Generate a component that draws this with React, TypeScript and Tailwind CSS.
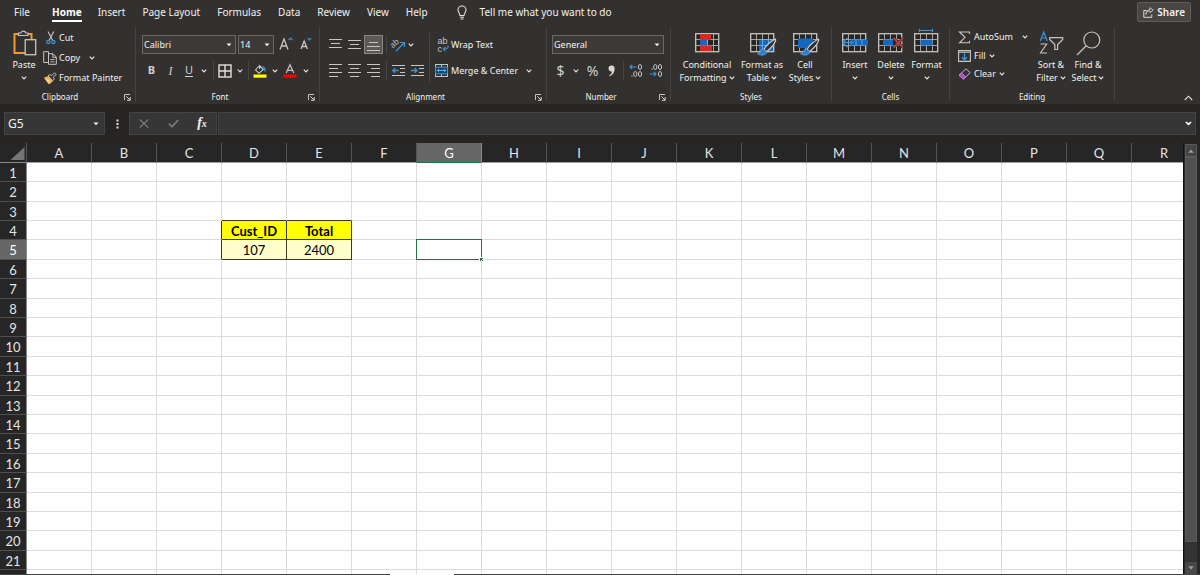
import React from "react";

const BLUE = "#3a96dd";
const GREY = "#c8c6c4";

function Chevron() {
  return (
    <svg width="6" height="4" viewBox="0 0 6 4" fill="none" className="shrink-0">
      <path d="M0.8 0.7 L3 2.9 L5.2 0.7" stroke="#e6e4e2" strokeWidth="1.2" />
    </svg>
  );
}

function Caret() {
  return (
    <svg width="6" height="4" viewBox="0 0 6 4" className="pointer-events-none shrink-0">
      <path d="M0.5 0.5 H5.5 L3 3.3 Z" fill="#f0f0f0" />
    </svg>
  );
}

function Launcher() {
  return (
    <svg width="7" height="7" viewBox="0 0 7 7" fill="none" stroke="#d6d4d2">
      <path d="M0.5 6 V0.5 H6" strokeWidth="0.9" />
      <path d="M2.3 2.3 L6 6 M6.2 3 V6.3 H3" strokeWidth="1" />
    </svg>
  );
}

function Icon({ w, h, children }: { w: number; h: number; children: React.ReactNode }) {
  return (
    <svg width={w} height={h} viewBox={`0 0 ${w} ${h}`} fill="none" className="shrink-0 overflow-visible">
      {children}
    </svg>
  );
}

function Tool({ label, className, children }: { label: string; className: string; children: React.ReactNode }) {
  return (
    <button aria-label={label} className={`flex h-[19px] shrink-0 items-center justify-center ${className}`}>
      {children}
    </button>
  );
}

function Sep() {
  return <span className="h-[19px] w-px shrink-0 bg-[#484644]" />;
}

function Group({
  title,
  launcher,
  className,
  children,
}: {
  title: string;
  launcher?: boolean;
  className: string;
  children: React.ReactNode;
}) {
  return (
    <section aria-label={title} className={`flex shrink-0 ${className}`}>
      <div className="flex min-w-0 flex-1 flex-col">
        <div className="h-[65px]">{children}</div>
        <div className="flex h-[14px] items-center text-[8px] leading-[14px]">
          <span className="flex-1 text-center">{title}</span>
          {launcher && (
            <button aria-label={`${title} settings`} className="flex w-[15px] justify-end pr-[4px]">
              <Launcher />
            </button>
          )}
        </div>
      </div>
      <span className="mt-[2px] h-[74px] w-px bg-[#454341]" />
    </section>
  );
}

function Combo({ label, value, className }: { label: string; value: string; className: string }) {
  return (
    <div className={`flex h-[19px] shrink-0 items-center border border-[#6b6967] bg-[#3b3a39] pr-[3px] pl-px ${className}`}>
      <select aria-label={label} defaultValue={value} className="min-w-0 flex-1 appearance-none bg-transparent text-[9px] outline-none">
        <option>{value}</option>
      </select>
      <Caret />
    </div>
  );
}

function Big({
  icon,
  lines,
  below,
  className,
}: {
  icon: React.ReactNode;
  lines: string[];
  below?: boolean;
  className: string;
}) {
  return (
    <button className={`flex shrink-0 flex-col items-center text-[9px] leading-[13px] whitespace-nowrap ${className}`}>
      <span className="flex h-[33px] items-center pt-[3px]">{icon}</span>
      <span>{lines[0]}</span>
      <span className="flex h-[13px] items-center gap-[2px]">
        {!below && <span>{lines[1]}</span>}
        <Chevron />
      </span>
    </button>
  );
}

function Lines({ rows, w, h }: { rows: [number, number, number][]; w: number; h: number }) {
  return (
    <Icon w={w} h={h}>
      {rows.map(([x, y, len]) => (
        <path key={y} d={`M${x} ${y + 0.5} h${len}`} stroke={GREY} />
      ))}
    </Icon>
  );
}

function TableBase() {
  return (
    <g>
      <rect x="0.7" y="2.7" width="23" height="18" fill="#262524" stroke={GREY} strokeWidth="1.3" />
      <path d="M6.5 3 V20 M12.5 3 V20 M18.5 3 V20 M1 8.5 H24 M1 14.5 H24" stroke="#a8a6a4" strokeWidth="1" />
    </g>
  );
}

function Brush() {
  return (
    <g>
      <path d="M25.3 8 C20 11 15.5 15.5 14 18.5 L16.5 20.7 C20 18 24.5 13.5 25.8 9 Z" fill="#323130" stroke="#d0cecc" strokeWidth="1.1" />
      <path d="M13.2 17.7 C10 18 11 22 7.5 22.8 C11 25 16.5 24.6 16.8 20.8 Z" fill="#2b7fd0" stroke="#79b8ee" strokeWidth="0.6" />
    </g>
  );
}

const tabs = ["Insert", "Page Layout", "Formulas", "Data", "Review", "View", "Help"];
const columns = "ABCDEFGHIJKLMNOPQR".split("");
const rows = Array.from({ length: 21 }, (_, i) => i + 1);
const values: Record<string, string> = { D4: "Cust_ID", E4: "Total", D5: "107", E5: "2400" };

function cellStyle(col: string, row: number) {
  const inTable = (col === "D" || col === "E") && (row === 4 || row === 5);
  const right = inTable || (col === "C" && (row === 4 || row === 5)) ? "border-r-[#3a3a20]" : "border-r-[#dcdcdc]";
  const bottom = inTable || (row === 3 && (col === "D" || col === "E")) ? "border-b-[#3a3a20]" : "border-b-[#dcdcdc]";
  const fill = inTable ? (row === 4 ? "bg-[#ffff00] font-bold" : "bg-[#ffffcc]") : "";
  return `${right} ${bottom} ${fill}`;
}

function Sheet() {
  return (
    <table className="w-[1197px] shrink-0 table-fixed border-separate border-spacing-0 text-center font-['Lato','Liberation_Sans',sans-serif] text-[13px] leading-[16px]">
      <colgroup>
        <col className="w-[27px]" />
        {columns.map((c) => (
          <col key={c} className="w-[65px]" />
        ))}
      </colgroup>
      <thead>
        <tr className="h-[20px] bg-[#262626] text-[#e4e4e4]">
          <td className="border-r border-b border-r-[#555] border-b-[#8a8a8a] p-0">
            <svg width="26" height="19" viewBox="0 0 26 19" className="block">
              <path d="M24.5 4 V17 H10.5 Z" fill="#767676" />
            </svg>
          </td>
          {columns.map((c) => (
            <th
              key={c}
              scope="col"
              className={`border-r border-b p-0 pt-px font-normal ${
                c === "G" ? "border-r-[#8a8a8a] border-b-[#217346] bg-[#666666] text-white" : "border-r-[#555] border-b-[#a0a0a0]"
              }`}
            >
              {c}
            </th>
          ))}
        </tr>
      </thead>
      <tbody>
        {rows.map((r) => (
          <tr key={r} className="h-[19px] nth-[5n]:h-[20px] nth-[5n+2]:h-[20px]">
            <th
              scope="row"
              className={`border-r border-b border-r-[#8a8a8a] border-b-[#505050] p-0 pt-px font-normal ${
                r === 5 ? "bg-[#666666] text-white" : "bg-[#262626] text-[#e4e4e4]"
              }`}
            >
              {r}
            </th>
            {columns.map((c) => (
              <td key={c} className={`relative border-r border-b p-0 pt-px text-black ${cellStyle(c, r)}`}>
                {values[c + r]}
                {c === "G" && r === 5 && (
                  <span className="absolute -top-px -right-px -bottom-px -left-px border border-[#217346]">
                    <span className="absolute -right-[2px] -bottom-[2px] size-[4px] border-t border-l border-white bg-[#217346]" />
                  </span>
                )}
              </td>
            ))}
          </tr>
        ))}
        <tr className="h-[20px]">
          <th className="border-r border-r-[#8a8a8a] bg-[#262626] p-0" />
          {columns.map((c) => (
            <td key={c} className="border-r border-r-[#dcdcdc] p-0" />
          ))}
        </tr>
      </tbody>
    </table>
  );
}

export default function App() {
  return (
    <div className="flex h-screen flex-col overflow-hidden bg-[#262524] font-['Noto_Sans','Open_Sans',sans-serif] text-[#f3f2f1]">
      <header className="shrink-0 bg-[#323130]">
        <nav className="flex h-[25px] items-start pt-[4px] pr-[9px] pl-[14px] text-[10px] leading-[16px] whitespace-nowrap">
          <button>File</button>
          <button className="ml-[22px] border-b-2 border-white font-bold text-white">Home</button>
          <div className="ml-[16px] flex gap-[17px]">
            {tabs.map((t) => (
              <button key={t}>{t}</button>
            ))}
          </div>
          <button className="ml-[29px] flex gap-[13px]">
            <span className="pt-px">
              <Icon w={10} h={15}>
                <path d="M3 10.5 C3 8.5 1 7.5 1 5 A4 4 0 0 1 9 5 C9 7.5 7 8.5 7 10.5 Z" stroke="#e4e2e0" strokeWidth="1.1" />
                <path d="M3 12.2 H7 M3.5 14 H6.5" stroke="#e4e2e0" strokeWidth="1" />
              </Icon>
            </span>
            <span>Tell me what you want to do</span>
          </button>
          <button className="-mt-[2px] ml-auto flex h-[20px] items-center gap-[3px] rounded-[2px] border border-[#605e5c] bg-[#484644] px-[5px] font-semibold">
            <Icon w={11} h={11}>
              <path d="M3.5 3.5 H0.8 V10.3 H8.8 V7.5" stroke="#dddbd9" />
              <path d="M3 7.5 C3.2 5 4.5 3.8 7 3.8 V5.7 L10.3 3 L7 0.7 V2.4 C4.5 2.6 3 4.5 3 7.5 Z" stroke="#dddbd9" strokeWidth="0.8" />
            </Icon>
            Share
          </button>
        </nav>

        <div className="flex h-[79px]">
          <Group title="Clipboard" launcher className="w-[136px]">
            <div className="flex pl-[9px]">
              <Big
                className="w-[30px]"
                below
                lines={["Paste"]}
                icon={
                  <Icon w={22} h={26}>
                    <rect x="1.5" y="4" width="17" height="19" stroke="#f09a28" strokeWidth="2" />
                    <path d="M5.5 5.5 V3 H8 C8 0.5 12.5 0.5 12.5 3 H15 V5.5 Z" fill="#323130" stroke={GREY} strokeWidth="1.1" />
                    <rect x="12.2" y="9.7" width="10.5" height="15" fill="#323130" stroke={GREY} strokeWidth="1.3" />
                  </Icon>
                }
              />
              <div className="flex flex-col pt-[3px] pl-[4px] text-[9px] whitespace-nowrap">
                <button className="flex h-[20px] items-center">
                  <span className="flex w-[16px] justify-center">
                    <Icon w={10} h={14}>
                      <path d="M2 0.5 L6.7 9.5 M7.7 0.5 L3 9.5" stroke={GREY} strokeWidth="1.1" />
                      <circle cx="2.3" cy="11" r="1.6" stroke={BLUE} strokeWidth="1.2" />
                      <circle cx="7.4" cy="11" r="1.6" stroke={BLUE} strokeWidth="1.2" />
                    </Icon>
                  </span>
                  Cut
                </button>
                <button className="flex h-[20px] items-center">
                  <span className="flex w-[16px]">
                    <Icon w={14} h={14}>
                      <path d="M5 11.5 H0.7 V0.7 H5.5 M5.5 0.7 V3" stroke={GREY} />
                      <path d="M5.5 2.7 H10 L13.3 6 V13.3 H5.5 Z M9.8 3 V6.3 H13" stroke={GREY} />
                      <path d="M7.3 8.5 H11.5 M7.3 10.8 H11.5" stroke={GREY} strokeWidth="0.9" />
                    </Icon>
                  </span>
                  Copy
                  <span className="pl-[9px]">
                    <Chevron />
                  </span>
                </button>
                <button className="flex h-[20px] items-center">
                  <span className="flex w-[16px]">
                    <Icon w={14} h={13}>
                      <path d="M0.8 5.5 L5 4.3 L10 9.2 L5.8 12.5 Z" fill="#f0b04a" />
                      <path d="M2.5 7.5 L7 8.8 M4 9.5 L7.5 10.5" stroke="#fff2d8" strokeWidth="0.8" />
                      <path d="M5 4 L7 2.5 L8.5 3.8 L11.5 0.8 L13.2 2.5 L10.2 5.4 L11.4 7 L9.8 8.7 Z" fill="#323130" stroke={GREY} strokeWidth="1" />
                    </Icon>
                  </span>
                  Format Painter
                </button>
              </div>
            </div>
          </Group>

          <Group title="Font" launcher className="w-[184px]">
            <div className="flex flex-col gap-[7px] pt-[10px] pl-[6px]">
              <div className="flex items-center">
                <Combo label="Font name" value="Calibri" className="w-[94px]" />
                <Combo label="Font size" value="14" className="ml-[2px] w-[36px]" />
                <Tool label="Increase font size" className="ml-[2px] w-[20px] pb-[3px]">
                  <Icon w={14} h={13}>
                    <path d="M1 12.5 L5 2 L9 12.5 M2.4 9 H7.6" stroke={GREY} strokeWidth="1.3" />
                    <path d="M9.7 3 L11.5 1.2 L13.3 3" stroke={BLUE} strokeWidth="1.2" />
                  </Icon>
                </Tool>
                <Tool label="Decrease font size" className="w-[20px] pb-[3px]">
                  <Icon w={12} h={13}>
                    <path d="M1 12 L4.2 4 L7.4 12 M2 9.5 H6.4" stroke={GREY} strokeWidth="1.3" />
                    <path d="M7.7 1.2 L9.4 3 L11.1 1.2" stroke={BLUE} strokeWidth="1.2" />
                  </Icon>
                </Tool>
              </div>
              <div className="flex items-center text-[11px] text-[#d2d0ce]">
                <Tool label="Bold" className="w-[19px] font-bold">B</Tool>
                <Tool label="Italic" className="w-[19px] font-['Liberation_Serif',serif] text-[12px] italic">I</Tool>
                <Tool label="Underline" className="w-[18px] underline underline-offset-2">U</Tool>
                <Tool label="Underline options" className="w-[12px]"><Chevron /></Tool>
                <span className="w-[3px]" />
                <Sep />
                <Tool label="Borders" className="w-[22px]">
                  <Icon w={14} h={14}>
                    <rect x="1" y="1" width="12" height="12" stroke="#e4e2e0" strokeWidth="1.4" />
                    <path d="M7 1 V13 M1 7 H13" stroke="#e4e2e0" strokeWidth="1.4" />
                  </Icon>
                </Tool>
                <Tool label="Border options" className="w-[7px]"><Chevron /></Tool>
                <span className="w-[5px]" />
                <Sep />
                <Tool label="Fill color" className="w-[22px]">
                  <Icon w={14} h={14}>
                    <path d="M2.5 6 L6.5 1.5 L10.3 5.5 L6 9.3 Z M6.5 1.5 V5" stroke={GREY} strokeWidth="1.1" />
                    <path d="M9.5 2.5 C11.5 3 12 5 12 7.5" stroke={BLUE} strokeWidth="1.3" />
                    <rect x="0.5" y="10.5" width="13" height="3.2" fill="#ffff00" />
                  </Icon>
                </Tool>
                <Tool label="Fill options" className="w-[7px]"><Chevron /></Tool>
                <Tool label="Font color" className="w-[24px]">
                  <Icon w={14} h={14}>
                    <path d="M3.2 9 L7 0.8 L10.8 9 M4.5 6.3 H9.5" stroke={GREY} strokeWidth="1.2" />
                    <rect x="0.5" y="10.5" width="13" height="3.2" fill="#ff0000" />
                  </Icon>
                </Tool>
                <Tool label="Font color options" className="w-[7px]"><Chevron /></Tool>
              </div>
            </div>
          </Group>

          <Group title="Alignment" launcher className="w-[227px]">
            <div className="flex">
              <div className="flex flex-col gap-[7px] pt-[10px] pl-[5px]">
                <div className="flex items-center">
                  <Tool label="Top align" className="w-[20px] pb-[3px]"><Lines w={13} h={13} rows={[[0, 2, 13], [2, 6, 9], [0, 10, 13]]} /></Tool>
                  <Tool label="Middle align" className="w-[19px]"><Lines w={13} h={13} rows={[[0, 2, 13], [2, 6, 9], [0, 10, 13]]} /></Tool>
                  <Tool label="Bottom align" className="w-[19px] border border-[#8a8886] bg-[#5c5a58] pt-[4px]">
                    <Lines w={13} h={13} rows={[[2, 2, 9], [0, 6, 13], [0, 10, 13]]} />
                  </Tool>
                  <span className="w-[3px]" />
                  <Sep />
                  <Tool label="Orientation" className="ml-[2px] w-[19px]">
                    <Icon w={15} h={14}>
                      <text x="0" y="8" fontSize="8" fill={GREY} transform="rotate(-42 4 7)">ab</text>
                      <path d="M5 13 L13 5 M9 4.5 H13.5 V9" stroke={BLUE} strokeWidth="1.2" />
                    </Icon>
                  </Tool>
                  <Tool label="Orientation options" className="w-[6px]"><Chevron /></Tool>
                </div>
                <div className="flex items-center">
                  <Tool label="Align left" className="w-[20px]"><Lines w={13} h={13} rows={[[0, 0, 13], [0, 4, 9], [0, 8, 13], [0, 12, 9]]} /></Tool>
                  <Tool label="Center" className="w-[19px]"><Lines w={13} h={13} rows={[[0, 0, 13], [2, 4, 9], [0, 8, 13], [2, 12, 9]]} /></Tool>
                  <Tool label="Align right" className="w-[19px]"><Lines w={13} h={13} rows={[[0, 0, 13], [4, 4, 9], [0, 8, 13], [4, 12, 9]]} /></Tool>
                  <span className="w-[3px]" />
                  <Sep />
                  <Tool label="Decrease indent" className="ml-px w-[20px]">
                    <Icon w={13} h={13}>
                      <path d="M0 1.5 H13 M8 4.5 H13 M8 8.5 H13 M0 11.5 H13" stroke={GREY} />
                      <path d="M6.5 6.5 H1 M3 4.3 L0.8 6.5 L3 8.7" stroke={BLUE} strokeWidth="1.3" />
                    </Icon>
                  </Tool>
                  <Tool label="Increase indent" className="w-[19px]">
                    <Icon w={13} h={13}>
                      <path d="M0 1.5 H13 M8 4.5 H13 M8 8.5 H13 M0 11.5 H13" stroke={GREY} />
                      <path d="M0 6.5 H5.5 M3.7 4.3 L5.9 6.5 L3.7 8.7" stroke={BLUE} strokeWidth="1.3" />
                    </Icon>
                  </Tool>
                </div>
              </div>
              <span className="mt-[8px] mr-[5px] ml-[2px] h-[49px] w-px bg-[#484644]" />
              <div className="flex flex-col gap-[7px] pt-[10px] text-[9px] whitespace-nowrap">
                <button className="flex h-[19px] items-center">
                  <span className="flex w-[16px] pl-[2px]">
                    <Icon w={13} h={14}>
                      <g fontFamily="Liberation Sans" fontSize="9" fill={GREY}>
                        <text x="0.5" y="6">ab</text>
                        <text x="0.5" y="14">c</text>
                      </g>
                      <path d="M11 7.5 C11.5 10.5 10 11 6.5 11 M8.5 8.8 L6.3 11 L8.5 13.2" stroke={BLUE} strokeWidth="1.2" />
                    </Icon>
                  </span>
                  Wrap Text
                </button>
                <button className="flex h-[19px] items-center">
                  <span className="flex w-[16px]">
                    <Icon w={13} h={13}>
                      <rect x="0.5" y="0.5" width="12" height="12" stroke={GREY} />
                      <path d="M6.5 0.5 V3 M6.5 10 V12.5" stroke={GREY} />
                      <rect x="0.5" y="3.2" width="12" height="6.6" fill="#1d3f5e" stroke={BLUE} />
                      <path d="M2.3 6.5 H10.7 M4 4.8 L2.3 6.5 L4 8.2 M9 4.8 L10.7 6.5 L9 8.2" stroke="#62b5f2" />
                    </Icon>
                  </span>
                  Merge &amp; Center
                  <span className="pl-[8px]"><Chevron /></span>
                </button>
              </div>
            </div>
          </Group>

          <Group title="Number" launcher className="w-[124px]">
            <div className="flex flex-col gap-[7px] pt-[10px] pl-[5px]">
              <Combo label="Number format" value="General" className="w-[112px]" />
              <div className="flex items-center text-[14px] text-[#d2d0ce]">
                <Tool label="Accounting format" className="w-[17px]">$</Tool>
                <Tool label="Accounting options" className="w-[13px]"><Chevron /></Tool>
                <Tool label="Percent" className="w-[21px]">%</Tool>
                <Tool label="Comma style" className="w-[17px]">
                  <Icon w={7} h={12}>
                    <path d="M0.5 3.5 A3 3 0 0 1 6.6 3.5 C6.8 7 5 10 1.6 11.2 L1.2 10.2 C3 9.2 3.8 8 3.9 6.4 C2 6.8 0.5 5.4 0.5 3.5 Z" fill="#d8d6d4" />
                  </Icon>
                </Tool>
                <span className="w-[3px]" />
                <Sep />
                <Tool label="Increase decimal" className="ml-[3px] w-[18px]">
                  <Icon w={14} h={13}>
                    <g stroke={GREY}>
                      <ellipse cx="11" cy="3" rx="1.6" ry="2.5" />
                      <ellipse cx="11" cy="10" rx="1.6" ry="2.5" />
                      <ellipse cx="6.3" cy="10" rx="1.6" ry="2.5" />
                    </g>
                    <rect x="2.4" y="11.6" width="1.2" height="1.2" fill={GREY} />
                    <path d="M7.5 3 H1 M3.2 0.8 L1 3 L3.2 5.2" stroke={BLUE} strokeWidth="1.2" />
                  </Icon>
                </Tool>
                <Tool label="Decrease decimal" className="ml-[2px] w-[18px]">
                  <Icon w={14} h={13}>
                    <g stroke={GREY}>
                      <ellipse cx="11" cy="3" rx="1.6" ry="2.5" />
                      <ellipse cx="6.3" cy="3" rx="1.6" ry="2.5" />
                      <ellipse cx="11" cy="10" rx="1.6" ry="2.5" />
                    </g>
                    <rect x="2.4" y="4.6" width="1.2" height="1.2" fill={GREY} />
                    <path d="M0.5 10 H7 M4.8 7.8 L7 10 L4.8 12.2" stroke={BLUE} strokeWidth="1.2" />
                  </Icon>
                </Tool>
              </div>
            </div>
          </Group>

          <Group title="Styles" className="w-[161px]">
            <div className="flex pl-[7px]">
              <Big
                className="w-[58px]"
                lines={["Conditional", "Formatting"]}
                icon={
                  <Icon w={25} h={24}>
                    <TableBase />
                    <rect x="5" y="3.3" width="11" height="5.6" fill="#e0241b" />
                    <rect x="5" y="9" width="7" height="5.4" fill="#1668bd" />
                    <rect x="5" y="14.5" width="12" height="5.6" fill="#e0241b" />
                  </Icon>
                }
              />
              <Big
                className="ml-[2px] w-[48px]"
                lines={["Format as", "Table"]}
                icon={
                  <Icon w={25} h={24}>
                    <TableBase />
                    <path d="M9 9 H23 V20 H9 Z" fill="#1668bd" />
                    <path d="M12.5 9 V20 M18.5 9 V20 M9 14.5 H23" stroke="#5aa5e8" />
                    <Brush />
                  </Icon>
                }
              />
              <Big
                className="w-[38px]"
                lines={["Cell", "Styles"]}
                icon={
                  <Icon w={25} h={24}>
                    <TableBase />
                    <rect x="5" y="7.5" width="15" height="9.5" fill="#1668bd" />
                    <Brush />
                  </Icon>
                }
              />
            </div>
          </Group>

          <Group title="Cells" className="w-[118px]">
            <div className="flex pl-[5px]">
              <Big
                below
                className="w-[36px]"
                lines={["Insert"]}
                icon={
                  <Icon w={26} h={24}>
                    <TableBase />
                    <rect x="8" y="8.5" width="18" height="6" fill="#1668bd" />
                    <path d="M14 8.5 V14.5 M20 8.5 V14.5" stroke="#5aa5e8" />
                    <path d="M11 11.5 H1 M5.5 6.8 L0.8 11.5 L5.5 16.2" stroke={BLUE} strokeWidth="1.3" />
                  </Icon>
                }
              />
              <Big
                below
                className="w-[36px]"
                lines={["Delete"]}
                icon={
                  <Icon w={26} h={24}>
                    <TableBase />
                    <rect x="5" y="8.5" width="10" height="6" fill="#1668bd" />
                    <path d="M15.5 7 L25 16.5 M25 7 L15.5 16.5" stroke="#323130" strokeWidth="3" />
                    <path d="M15.5 7 L25 16.5 M25 7 L15.5 16.5" stroke="#e0413c" strokeWidth="1.3" />
                  </Icon>
                }
              />
              <Big
                below
                className="w-[35px]"
                lines={["Format"]}
                icon={
                  <Icon w={25} h={24}>
                    <TableBase />
                    <rect x="6.5" y="9" width="12" height="5.5" fill="#1668bd" />
                    <path d="M5.5 -0.5 H18.5 M5.5 -2 V1 M18.5 -2 V1" stroke={BLUE} strokeWidth="1.2" />
                  </Icon>
                }
              />
            </div>
          </Group>

          <Group title="Editing" className="w-[165px]">
            <div className="flex pl-[8px]">
              <div className="flex w-[75px] flex-col pt-[3px] text-[9px] whitespace-nowrap">
                <button className="flex h-[18px] items-center">
                  <span className="flex w-[16px]">
                    <Icon w={13} h={13}>
                      <path d="M11.5 3 V1 H1.5 L7 6.3 L1.5 11.8 H11.5 V9.8" stroke={GREY} strokeWidth="1.1" />
                    </Icon>
                  </span>
                  AutoSum
                  <span className="pl-[9px]"><Chevron /></span>
                </button>
                <button className="flex h-[19px] items-center">
                  <span className="flex w-[16px]">
                    <Icon w={13} h={12}>
                      <path d="M0.6 0.6 H12.4 V11.4 H0.6 Z M0.6 2.3 H12.4" stroke={GREY} strokeWidth="1.1" />
                      <path d="M6.5 3.2 V9.7 M4 7.3 L6.5 9.8 L9 7.3" stroke={BLUE} strokeWidth="1.3" />
                    </Icon>
                  </span>
                  Fill
                  <span className="pl-[3px]"><Chevron /></span>
                </button>
                <button className="flex h-[18px] items-center">
                  <span className="flex w-[16px]">
                    <Icon w={13} h={12}>
                      <path d="M8 0.8 L12.2 4.6 L5.5 11 L1 7.3 Z" stroke="#d8a8dc" strokeWidth="1" />
                      <path d="M3.6 5 L7.8 8.7 L5.5 11 L1 7.3 Z" fill="#b146c2" stroke="#d77fe0" strokeWidth="0.8" />
                    </Icon>
                  </span>
                  Clear
                  <span className="pl-[3px]"><Chevron /></span>
                </button>
              </div>
              <Big
                className="w-[36px]"
                lines={["Sort &", "Filter"]}
                icon={
                  <Icon w={25} h={24}>
                    <path d="M1.3 10 L4.7 1 L8.1 10 M2.5 7 H6.9" stroke={BLUE} strokeWidth="1.2" />
                    <path d="M1.5 13 H7.7 L1.5 22 H8" stroke={GREY} strokeWidth="1.1" />
                    <path d="M10.7 6.6 H23.7 V8.5 L18.6 13.5 V18.5 H15.8 V13.5 L10.7 8.5 Z" stroke={GREY} strokeWidth="1.2" />
                  </Icon>
                }
              />
              <Big
                className="w-[38px]"
                lines={["Find &", "Select"]}
                icon={
                  <Icon w={25} h={25}>
                    <circle cx="15.8" cy="9" r="8" stroke={GREY} strokeWidth="1.2" />
                    <path d="M10 15 L1 24" stroke={GREY} strokeWidth="1.3" />
                  </Icon>
                }
              />
            </div>
          </Group>

          <button aria-label="Collapse ribbon" className="mt-auto mr-[7px] mb-[3px] ml-auto">
            <Icon w={9} h={6}>
              <path d="M0.8 5 L4.5 1.2 L8.2 5" stroke="#e4e2e0" strokeWidth="1.1" />
            </Icon>
          </button>
        </div>
      </header>

      <div className="flex h-[39px] shrink-0 items-center pr-[4px] pl-[4px]">
        <div className="flex h-[23px] w-[101px] items-center border border-[#444] bg-[#363636] pr-[5px] pl-[3px]">
          <input aria-label="Name box" defaultValue="G5" className="min-w-0 flex-1 bg-transparent text-[12px] outline-none" />
          <button aria-label="Named ranges"><Caret /></button>
        </div>
        <span className="flex w-[24px] justify-center">
          <Icon w={3} h={10}>
            <path d="M0.5 0.5 h2 v2 h-2 Z M0.5 4 h2 v2 h-2 Z M0.5 7.5 h2 v2 h-2 Z" fill="#e4e2e0" />
          </Icon>
        </span>
        <div className="flex h-[23px] w-[88px] items-center border border-[#444] bg-[#363636]">
          <button aria-label="Cancel" className="flex w-[28px] justify-center">
            <Icon w={10} h={9}>
              <path d="M0.8 0.5 L9.2 8.5 M9.2 0.5 L0.8 8.5" stroke="#7a7876" strokeWidth="1.2" />
            </Icon>
          </button>
          <button aria-label="Enter" className="flex w-[30px] justify-center">
            <Icon w={11} h={9}>
              <path d="M0.8 4.5 L4 7.7 L10.2 1" stroke="#7a7876" strokeWidth="1.7" />
            </Icon>
          </button>
          <button aria-label="Insert function" className="flex w-[28px] items-baseline justify-center font-['Liberation_Serif',serif] text-[14px] leading-[16px] font-bold italic">
            f<span className="text-[10px]">x</span>
          </button>
        </div>
        <div className="ml-px flex h-[23px] min-w-0 flex-1 items-center border border-[#444] bg-[#363636] pr-[3px]">
          <input aria-label="Formula bar" className="min-w-0 flex-1 bg-transparent px-1 text-[12px] outline-none" />
          <button aria-label="Expand formula bar">
            <Icon w={7} h={5}>
              <path d="M1 1 L3.5 3.4 L6 1" stroke="#ffffff" strokeWidth="1.7" />
            </Icon>
          </button>
        </div>
      </div>

      <main className="flex min-h-0 flex-1">
        <div className="flex min-w-0 flex-1 items-start overflow-hidden bg-white">
          <Sheet />
        </div>
        <div className="flex w-[17px] shrink-0 flex-col border-l border-[#111] bg-[#262626] pt-px pr-[3px] pl-px">
          <button aria-label="Scroll up" className="flex h-[13px] items-center justify-center border border-[#5a5a5a] bg-[#444]">
            <Icon w={6} h={4}>
              <path d="M0.3 3.7 L3 0.5 L5.7 3.7 Z" fill="#a0a0a0" />
            </Icon>
          </button>
          <div className="flex flex-1 flex-col bg-[#333]">
            <div className="h-[95%] border border-[#5a5a5a] bg-[#505050]" />
          </div>
          <button aria-label="Scroll down" className="flex h-[12px] items-center justify-center bg-[#484848]">
            <Icon w={6} h={4}>
              <path d="M0.3 0.3 L3 3.5 L5.7 0.3 Z" fill="#a0a0a0" />
            </Icon>
          </button>
        </div>
      </main>
      <footer className="flex h-px shrink-0 bg-[#444] pl-[390px]">
        <span className="h-px w-[64px] bg-white" />
      </footer>
    </div>
  );
}
